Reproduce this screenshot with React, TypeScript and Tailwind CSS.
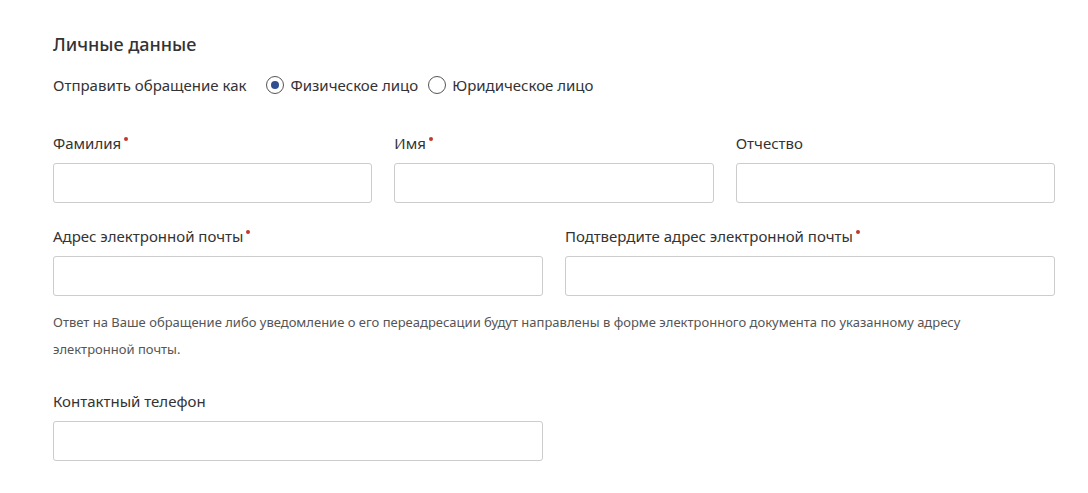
export default function App() {
  const Label = ({ text, req }: { text: string; req?: boolean }) => (
    <div className="h-[20px] text-[15px] leading-[20px] text-[#333]">
      {text}
      {req && <span className="relative -top-[6px] ml-[3px] inline-block h-[4px] w-[4px] rounded-full bg-[#c0392b] align-middle"></span>}
    </div>
  )
  const Input = () => <div className="mt-[10px] h-[40px] rounded-[3px] border border-[#ccc] bg-white"></div>
  const Radio = ({ checked, text }: { checked?: boolean; text: string }) => (
    <div className="flex items-center gap-[6px]">
      <span className="flex h-[18px] w-[18px] items-center justify-center rounded-full border border-[#555] bg-white">
        {checked && <span className="h-[8px] w-[8px] rounded-full bg-[#2f4f8f]"></span>}
      </span>
      <span>{text}</span>
    </div>
  )
  return (
    <div className="h-[493px] w-[1088px] bg-white pl-[53px] pr-[33px] pt-[33px] font-['Roboto',sans-serif] text-[#333]">
      <h2 className="text-[18px] font-medium leading-[22px] text-[#333]">Личные данные</h2>
      <div className="mt-[20px] flex items-center text-[15px] leading-[20px]">
        <span className="mr-[20px]">Отправить обращение как</span>
        <div className="flex items-center gap-[10px]">
          <Radio checked text="Физическое лицо" />
          <Radio text="Юридическое лицо" />
        </div>
      </div>
      <div className="mt-[38px] grid grid-cols-3 gap-x-[22px]">
        <div><Label text="Фамилия" req /><Input /></div>
        <div><Label text="Имя" req /><Input /></div>
        <div><Label text="Отчество" /><Input /></div>
      </div>
      <div className="mt-[23px] grid grid-cols-2 gap-x-[22px]">
        <div><Label text="Адрес электронной почты" req /><Input /></div>
        <div><Label text="Подтвердите адрес электронной почты" req /><Input /></div>
      </div>
      <p className="mt-[13px] text-[13px] leading-[27px] text-[#555]">
        Ответ на Ваше обращение либо уведомление о его переадресации будут направлены в форме электронного документа по указанному адресу
        <br />
        электронной почты.
      </p>
      <div className="mt-[28px] w-[490px]">
        <Label text="Контактный телефон" />
        <Input />
      </div>
    </div>
  )
}
